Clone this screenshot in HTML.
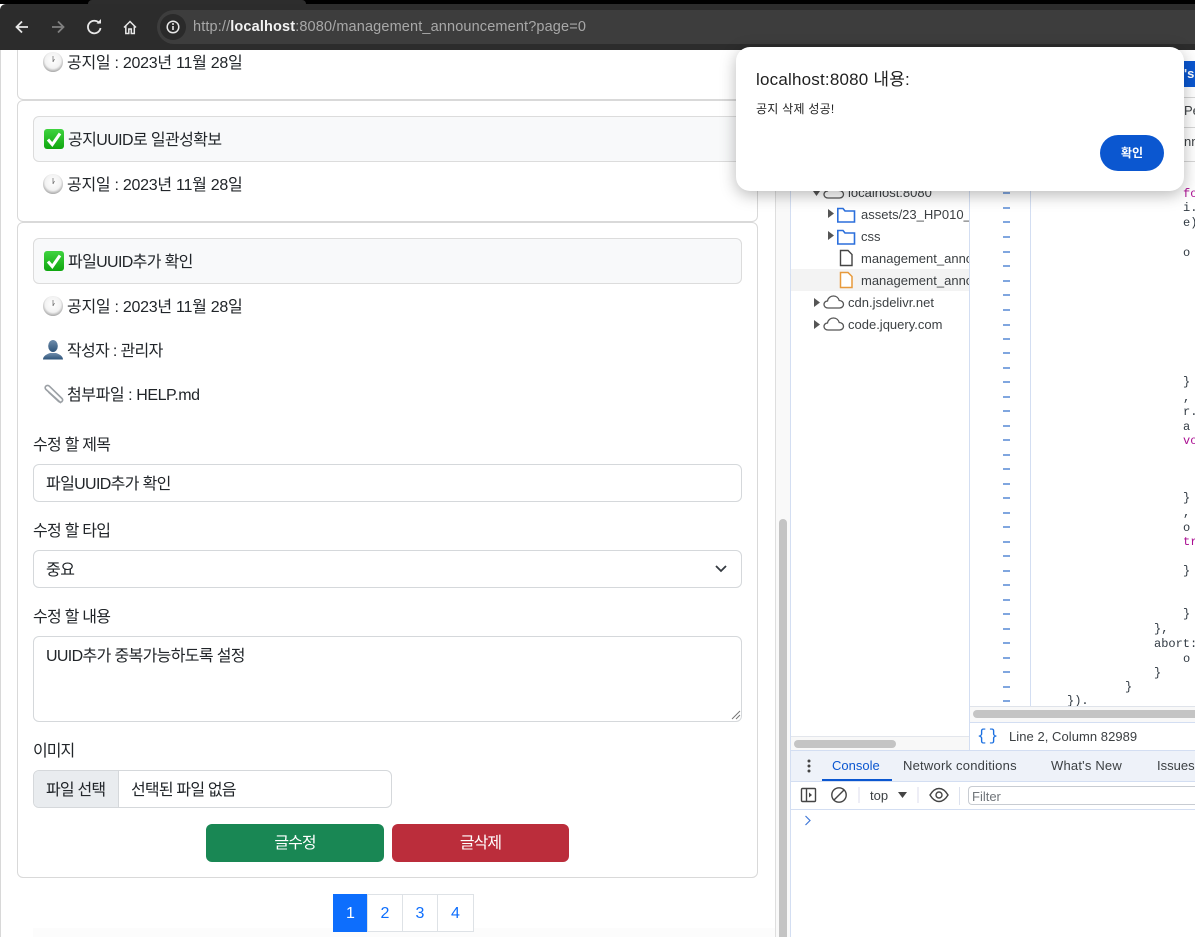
<!DOCTYPE html>
<html lang="ko"><head><meta charset="utf-8"><title>management_announcement</title>
<style>
*{box-sizing:border-box}
html,body{margin:0;padding:0}
body{width:1195px;height:937px;overflow:hidden;position:relative;background:#fff;font-family:"Liberation Sans","Noto Sans CJK KR",sans-serif;color:#212529}
.a{position:absolute}
.t{position:absolute;white-space:nowrap;font-size:16px;line-height:24px;color:#212529}
.card{position:absolute;left:17px;width:741px;background:#fff;border:1px solid #d9d9d9;border-radius:6px}
.hd{position:absolute;left:33px;width:709px;height:46px;background:#f8f9fa;border:1px solid #dcdcdc;border-radius:6px}
.inp{position:absolute;left:33px;width:709px;background:#fff;border:1px solid #d5d8db;border-radius:6px}
.tree{position:absolute;white-space:nowrap;font-size:13px;line-height:16px;color:#3c4043}
.code{position:absolute;white-space:pre;font:12px/14px "Liberation Mono",monospace;color:#303942;margin-top:1px}
.p{color:#aa0d91}
.dash{position:absolute;left:1003px;width:7px;height:1.500px;background:#80a6df}
.pg{position:absolute;top:894px;height:38px;background:#fff;border:1px solid #dee2e6;color:#0d6efd;font-size:16px;line-height:38px;text-align:center}
.dt{position:absolute;white-space:nowrap;font-size:13px;line-height:16px;color:#3c4043}
</style></head><body>

<!-- page -->
<div class="a" style="left:0;top:50px;width:1px;height:887px;background:#d8d8d8"></div>
<div class="a" style="left:33px;top:928px;width:742px;height:9px;background:#fcfcfc"></div>
<div class="card" style="top:30px;height:70px"></div>
<div class="card" style="top:100px;height:122px"></div>
<div class="card" style="top:222px;height:656px"></div>

<svg style="position:absolute;width:0;height:0"><defs>
<linearGradient id="g1" x1="0" y1="0" x2="0" y2="1"><stop offset="0" stop-color="#3fd33f"/><stop offset="1" stop-color="#0fa60f"/></linearGradient>
<radialGradient id="g2" cx=".5" cy=".42" r=".58"><stop offset="0" stop-color="#fff"/><stop offset=".68" stop-color="#f2f2f2"/><stop offset="1" stop-color="#a6a6a6"/></radialGradient>
<linearGradient id="g3" x1="0" y1="0" x2="0" y2="1"><stop offset="0" stop-color="#6f8dac"/><stop offset="1" stop-color="#2d5379"/></linearGradient>
<symbol id="chk" viewBox="0 0 20 20"><rect width="20" height="20" rx="3" fill="url(#g1)"/><path d="M4 10.500 8.300 15.500 16 4.500" fill="none" stroke="#fff" stroke-width="3"/></symbol>
<symbol id="clk" viewBox="0 0 20 20"><circle cx="10" cy="10" r="10" fill="url(#g2)"/><path d="M10 10V4M10 10l1.500-3" stroke="#777" stroke-width=".8"/></symbol>
</defs></svg>

<svg class="a" style="left:43px;top:52px" width="20" height="20"><use href="#clk"/></svg>
<div class="t" style="left:67px;top:52px;letter-spacing:-.27px">공지일 : 2023년 11월 28일</div>

<div class="hd" style="top:116px"></div>
<svg class="a" style="left:44px;top:129px" width="20" height="20"><use href="#chk"/></svg>
<div class="t" style="left:68px;top:129px;letter-spacing:-.6px">공지UUID로 일관성확보</div>
<svg class="a" style="left:43px;top:174px" width="20" height="20"><use href="#clk"/></svg>
<div class="t" style="left:67px;top:174px;letter-spacing:-.27px">공지일 : 2023년 11월 28일</div>

<div class="hd" style="top:238px"></div>
<svg class="a" style="left:44px;top:251px" width="20" height="20"><use href="#chk"/></svg>
<div class="t" style="left:68px;top:251px;letter-spacing:-.65px">파일UUID추가 확인</div>
<svg class="a" style="left:43px;top:296px" width="20" height="20"><use href="#clk"/></svg>
<div class="t" style="left:67px;top:296px;letter-spacing:-.27px">공지일 : 2023년 11월 28일</div>
<svg class="a" style="left:43px;top:340px" width="20" height="20" viewBox="0 0 20 20"><ellipse cx="10" cy="6" rx="4.800" ry="6" fill="url(#g3)"/><path d="M0 19.500c0-4 4.500-5.500 7-6.500h6c2.500 1 7 2.500 7 6.500z" fill="url(#g3)"/></svg>
<div class="t" style="left:67px;top:340px;letter-spacing:-.67px">작성자 : 관리자</div>
<svg class="a" style="left:43px;top:384px" width="21" height="21" viewBox="0 0 21 21" fill="none"><path d="M18 19 3 5.500C.5 3 4 0 6.500 2.300L19 14.500c2 2 -1 5-3.300 3L5.500 8" stroke="#9ba0a5" stroke-width="1.600"/></svg>
<div class="t" style="left:67px;top:384px;letter-spacing:-.43px">첨부파일 : HELP.md</div>

<div class="t" style="left:33px;top:434px;letter-spacing:-.75px">수정 할 제목</div>
<div class="inp" style="top:464px;height:38px"></div>
<div class="t" style="left:46px;top:473px;letter-spacing:-.65px">파일UUID추가 확인</div>
<div class="t" style="left:33px;top:520px;letter-spacing:-.75px">수정 할 타입</div>
<div class="inp" style="top:550px;height:38px"></div>
<div class="t" style="left:46px;top:559px;letter-spacing:-.5px">중요</div>
<svg class="a" style="left:714px;top:563px" width="14" height="12" fill="none"><path d="M2 3l5 5 5-5" stroke="#343a40" stroke-width="1.800"/></svg>
<div class="t" style="left:33px;top:606px;letter-spacing:-.75px">수정 할 내용</div>
<div class="inp" style="top:636px;height:86px"></div>
<div class="t" style="left:46px;top:645px;letter-spacing:-.65px">UUID추가 중복가능하도록 설정</div>
<svg class="a" style="left:731px;top:710px" width="10" height="10" fill="none" stroke="#777"><path d="M1 9 9 1M5 9 9 5"/></svg>
<div class="t" style="left:33px;top:740px;letter-spacing:-1px">이미지</div>
<div class="a" style="left:33px;top:770px;width:359px;height:38px;background:#fff;border:1px solid #d5d8db;border-radius:6px;overflow:hidden"><div class="a" style="left:0;top:0;width:85px;height:36px;background:#e9ecef;border-right:1px solid #d5d8db"></div></div>
<div class="t" style="left:46px;top:779px;letter-spacing:-.8px">파일 선택</div>
<div class="t" style="left:131px;top:779px;letter-spacing:-.8px">선택된 파일 없음</div>
<div class="a" style="left:206px;top:824px;width:178px;height:38px;background:#198754;border-radius:6px;color:#fff;font-size:16px;line-height:40px;text-align:center;letter-spacing:-1px">글수정</div>
<div class="a" style="left:392px;top:824px;width:177px;height:38px;background:#bb2d3b;border-radius:6px;color:#fff;font-size:16px;line-height:40px;text-align:center;letter-spacing:-1px">글삭제</div>
<div class="pg" style="left:333px;width:35px;background:#0d6efd;border-color:#0d6efd;color:#fff">1</div>
<div class="pg" style="left:367px;width:36px">2</div>
<div class="pg" style="left:402px;width:36px">3</div>
<div class="pg" style="left:437px;width:37px">4</div>

<!-- browser chrome -->
<div class="a" style="left:0;top:0;width:1195px;height:4px;background:#000"></div>
<div class="a" style="left:88px;top:0;width:218px;height:4px;background:#2d2d2d;border-radius:6px 6px 0 0"></div>
<div class="a" style="left:0;top:4px;width:1195px;height:46px;background:#2c2c2c;border-radius:6px 0 0 0"></div>
<div class="a" style="left:157px;top:10px;width:1038px;height:34px;background:#3d3d3d;border-radius:17px 0 0 17px"></div>
<svg class="a" style="left:0;top:4px" width="200" height="46" viewBox="0 0 200 46" fill="none">
<path d="M28 23H17M22 17.500 16.500 23l5.500 5.500" stroke="#e8e8e8" stroke-width="1.800"/>
<path d="M52 23H63M58 17.500 63.500 23 58 28.500" stroke="#808080" stroke-width="1.800"/>
<path d="M99.500 19.500A6.300 6.300 0 1 0 100.500 24" stroke="#e8e8e8" stroke-width="1.800"/>
<path d="M96.500 19.500h4.500V15z" fill="#e8e8e8"/>
<path d="M124 23.500 130 17.500l6 6M125.800 22v7.500h3V25h2.500v4.500h3V22" stroke="#e8e8e8" stroke-width="1.500"/>
<circle cx="173" cy="23" r="13" fill="#2a2a2a"/>
<circle cx="173" cy="23" r="5.800" stroke="#e8e8e8" stroke-width="1.500"/>
<path d="M173 22v4" stroke="#e8e8e8" stroke-width="1.600"/><circle cx="173" cy="20" r="1" fill="#e8e8e8"/>
</svg>
<div class="t" style="left:193px;top:15px;font-size:14.500px;color:#a8a8a8;letter-spacing:.14px">http://<span style="color:#f2f2f2;font-weight:bold">localhost</span>:8080/management_announcement?page=0</div>

<!-- page scrollbar -->
<div class="a" style="left:775px;top:50px;width:15px;height:887px;background:#f9f9f9;border-left:1px solid #dedede"></div>
<div class="a" style="left:779px;top:519px;width:8px;height:418px;background:#c4c4c4;border-radius:4px 4px 0 0"></div>

<!-- devtools -->
<div class="a" style="left:790px;top:50px;width:405px;height:887px;background:#fff;border-left:1px solid #d3def2"></div>
<div class="a" style="left:969px;top:50px;width:1px;height:700px;background:#d3def2"></div>
<div class="a" style="left:1030px;top:50px;width:1px;height:656px;background:#d3def2"></div>
<div class="a" style="left:1184px;top:61px;width:11px;height:26px;background:#0b57d0;color:#fff;font-size:13px;font-weight:bold;line-height:26px;white-space:nowrap;overflow:hidden">'s</div>
<div class="a" style="left:1184px;top:97px;width:11px;height:1px;background:#d6d6d6"></div>
<div class="a" style="left:1184px;top:127px;width:11px;height:1px;background:#d6d6d6"></div>
<div class="a" style="left:1184px;top:161px;width:11px;height:1px;background:#d6d6d6"></div>
<div class="dt" style="left:1184px;top:103px;width:11px;overflow:hidden">Pe</div>
<div class="dt" style="left:1184px;top:134px;width:11px;overflow:hidden">nn</div>

<!-- tree -->
<div class="a" style="left:791px;top:269px;width:178px;height:22px;background:#f3f3f3"></div>
<svg class="a" style="left:791px;top:180px" width="80" height="160" fill="none">
<path d="M22 11h7l-3.500 5z" fill="#555"/>
<path d="M37 29v9l6-4.500zM37 51v9l6-4.500z" fill="#555"/>
<path d="M23 118v9l6-4.500zM23 140v9l6-4.500z" fill="#555"/>
<path d="M46.800 28.500h5.200l2 2.500h9.500v11H46.800z" stroke="#2b6fdc" stroke-width="1.600" fill="#fff"/>
<path d="M46.800 50.500h5.200l2 2.500h9.500v11H46.800z" stroke="#2b6fdc" stroke-width="1.600" fill="#fff"/>
<path d="M49.500 70.500h7.500l4 4v11H49.500z" stroke="#444" stroke-width="1.400" fill="#fff"/>
<path d="M49.500 92.500h7.500l4 4v11H49.500z" stroke="#e79a3c" stroke-width="1.500" fill="#fff"/>
<path d="M37 128c-2.500 0-4-1.700-4-3.500 0-2 1.500-3.500 3.500-3.500.5-3 3-5 6-5s5 2 5.700 4.500c2.500 0 4.300 1.800 4.300 3.800 0 2-1.500 3.700-4 3.700z" stroke="#555" stroke-width="1.300" fill="#fff"/>
<path d="M37 150c-2.500 0-4-1.700-4-3.500 0-2 1.500-3.500 3.500-3.500.5-3 3-5 6-5s5 2 5.700 4.500c2.500 0 4.300 1.800 4.300 3.800 0 2-1.500 3.700-4 3.700z" stroke="#555" stroke-width="1.300" fill="#fff"/>
<path d="M37 18c-2.500 0-4-1.700-4-3.500 0-2 1.500-3.500 3.500-3.500.5-3 3-5 6-5s5 2 5.700 4.500c2.500 0 4.300 1.800 4.300 3.800 0 2-1.500 3.700-4 3.700z" stroke="#555" stroke-width="1.300" fill="#fff"/>
</svg>
<div class="tree" style="left:848px;top:185px">localhost:8080</div>
<div class="tree" style="left:861px;top:207px;width:108px;overflow:hidden">assets/23_HP010_</div>
<div class="tree" style="left:861px;top:229px">css</div>
<div class="tree" style="left:861px;top:251px;width:108px;overflow:hidden">management_announcement</div>
<div class="tree" style="left:861px;top:273px;width:108px;overflow:hidden">management_announcement</div>
<div class="tree" style="left:848px;top:295px">cdn.jsdelivr.net</div>
<div class="tree" style="left:848px;top:317px">code.jquery.com</div>

<!-- dashes -->
<div class="dash" style="top:192px"></div><div class="dash" style="top:207px"></div><div class="dash" style="top:221px"></div><div class="dash" style="top:236px"></div><div class="dash" style="top:251px"></div><div class="dash" style="top:265px"></div><div class="dash" style="top:280px"></div><div class="dash" style="top:294px"></div><div class="dash" style="top:309px"></div><div class="dash" style="top:324px"></div><div class="dash" style="top:338px"></div><div class="dash" style="top:352px"></div><div class="dash" style="top:367px"></div><div class="dash" style="top:381px"></div><div class="dash" style="top:396px"></div><div class="dash" style="top:410px"></div><div class="dash" style="top:425px"></div><div class="dash" style="top:439px"></div><div class="dash" style="top:454px"></div><div class="dash" style="top:468px"></div><div class="dash" style="top:483px"></div><div class="dash" style="top:497px"></div><div class="dash" style="top:512px"></div><div class="dash" style="top:526px"></div><div class="dash" style="top:541px"></div><div class="dash" style="top:555px"></div><div class="dash" style="top:570px"></div><div class="dash" style="top:584px"></div><div class="dash" style="top:599px"></div><div class="dash" style="top:613px"></div><div class="dash" style="top:628px"></div><div class="dash" style="top:642px"></div><div class="dash" style="top:657px"></div><div class="dash" style="top:671px"></div><div class="dash" style="top:686px"></div><div class="dash" style="top:700px"></div>

<!-- code -->
<div class="code p" style="left:1183px;top:186px">fo</div>
<div class="code" style="left:1183px;top:200px">i.</div>
<div class="code" style="left:1183px;top:215px">e)</div>
<div class="code" style="left:1183px;top:245px">o</div>
<div class="code" style="left:1183px;top:374px">}</div>
<div class="code" style="left:1183px;top:390px">,</div>
<div class="code" style="left:1183px;top:404px">r.</div>
<div class="code" style="left:1183px;top:419px">a</div>
<div class="code p" style="left:1183px;top:433px">vo</div>
<div class="code" style="left:1183px;top:490px">}</div>
<div class="code" style="left:1183px;top:505px">,</div>
<div class="code" style="left:1183px;top:520px">o</div>
<div class="code p" style="left:1183px;top:534px">tr</div>
<div class="code" style="left:1183px;top:563px">}</div>
<div class="code" style="left:1183px;top:606px">}</div>
<div class="code" style="left:1154px;top:621px">},</div>
<div class="code" style="left:1154px;top:636px">abort:</div>
<div class="code" style="left:1183px;top:651px">o</div>
<div class="code" style="left:1154px;top:665px">}</div>
<div class="code" style="left:1125px;top:679px">}</div>
<div class="code" style="left:1067px;top:693px">}).</div>

<!-- scrollbars/status -->
<div class="a" style="left:970px;top:706px;width:225px;height:44px;background:#fff"></div>
<div class="a" style="left:970px;top:706px;width:225px;height:17px;background:#f8f8f8;border-top:1px solid #dfe3ea;border-bottom:1px solid #d3def2"></div>
<div class="a" style="left:973px;top:710px;width:222px;height:8px;background:#c4c4c4;border-radius:4px 0 0 4px"></div>
<div class="a" style="left:791px;top:736px;width:178px;height:14px;background:#f8f8f8;border-top:1px solid #e3e6ec"></div>
<div class="a" style="left:794px;top:740px;width:102px;height:8px;background:#c4c4c4;border-radius:4px"></div>
<div class="a" style="left:977px;top:727px;font:16px/18px 'Liberation Mono',monospace;color:#1a6fe0;letter-spacing:2px;white-space:nowrap">{}</div>
<div class="dt" style="left:1009px;top:729px;letter-spacing:.05px">Line 2, Column 82989</div>

<!-- drawer -->
<div class="a" style="left:791px;top:750px;width:404px;height:31px;background:#eef2f9;border-top:1px solid #d3def2"></div>
<div class="a" style="left:791px;top:781px;width:404px;height:29px;background:#fff;border-top:1px solid #d3def2;border-bottom:1px solid #d3def2"></div>
<svg class="a" style="left:806px;top:758px" width="6" height="16"><circle cx="3" cy="3" r="1.500" fill="#444"/><circle cx="3" cy="8" r="1.500" fill="#444"/><circle cx="3" cy="13" r="1.500" fill="#444"/></svg>
<div class="dt" style="left:832px;top:758px;color:#0b57d0">Console</div>
<div class="a" style="left:822px;top:779px;width:70px;height:2px;background:#0b57d0"></div>
<div class="dt" style="left:903px;top:758px;letter-spacing:.22px">Network conditions</div>
<div class="dt" style="left:1051px;top:758px;letter-spacing:.2px">What's New</div>
<div class="dt" style="left:1157px;top:758px">Issues</div>
<svg class="a" style="left:800px;top:786px" width="150" height="20" fill="none">
<rect x="1.500" y="2.500" width="14" height="13" rx="1" stroke="#444" stroke-width="1.400"/><path d="M6.500 2.500v13" stroke="#444" stroke-width="1.400"/><path d="M9 6.500v5l3-2.500z" fill="#444"/>
<circle cx="39" cy="9" r="7.200" stroke="#444" stroke-width="1.400"/><path d="M34 14l10-10" stroke="#444" stroke-width="1.400"/>
<path d="M59 1v16" stroke="#dde" /><path d="M98 6h9l-4.500 6z" fill="#444"/><path d="M118 1v16" stroke="#dde"/>
<path d="M130 9c3-5 6-6.500 9-6.500s6 1.500 9 6.500c-3 5-6 6.500-9 6.500s-6-1.500-9-6.500z" stroke="#444" stroke-width="1.400"/><circle cx="139" cy="9" r="3" stroke="#444" stroke-width="1.400"/>
</svg>
<div class="dt" style="left:870px;top:788px">top</div>
<div class="a" style="left:959px;top:787px;width:1px;height:18px;background:#dde2ee"></div>
<div class="a" style="left:968px;top:786px;width:227px;height:19px;background:#fff;border:1px solid #c8ccd2;border-right:0;border-radius:4px 0 0 4px"></div>
<div class="dt" style="left:972px;top:789px;font-size:13px;color:#70757a">Filter</div>
<svg class="a" style="left:804px;top:815px" width="8" height="11" fill="none"><path d="M1.500 1 6 5.500 1.500 10" stroke="#3f78d8" stroke-width="1.200"/></svg>

<!-- dialog -->
<div class="a" style="left:736px;top:47px;width:448px;height:144px;background:#fff;border-radius:14px;box-shadow:0 4px 16px rgba(0,0,0,.28)"></div>
<div class="t" style="left:756px;top:68px;font-size:17px;color:#1f1f1f;letter-spacing:.2px">localhost:8080 내용:</div>
<div class="t" style="left:756px;top:97px;font-size:12px;color:#1f1f1f;letter-spacing:.25px">공지 삭제 성공!</div>
<div class="a" style="left:1100px;top:135px;width:64px;height:36px;background:#0b57d0;border-radius:18px;color:#fff;font-size:12px;font-weight:bold;line-height:36px;text-align:center">확인</div>
</body></html>
